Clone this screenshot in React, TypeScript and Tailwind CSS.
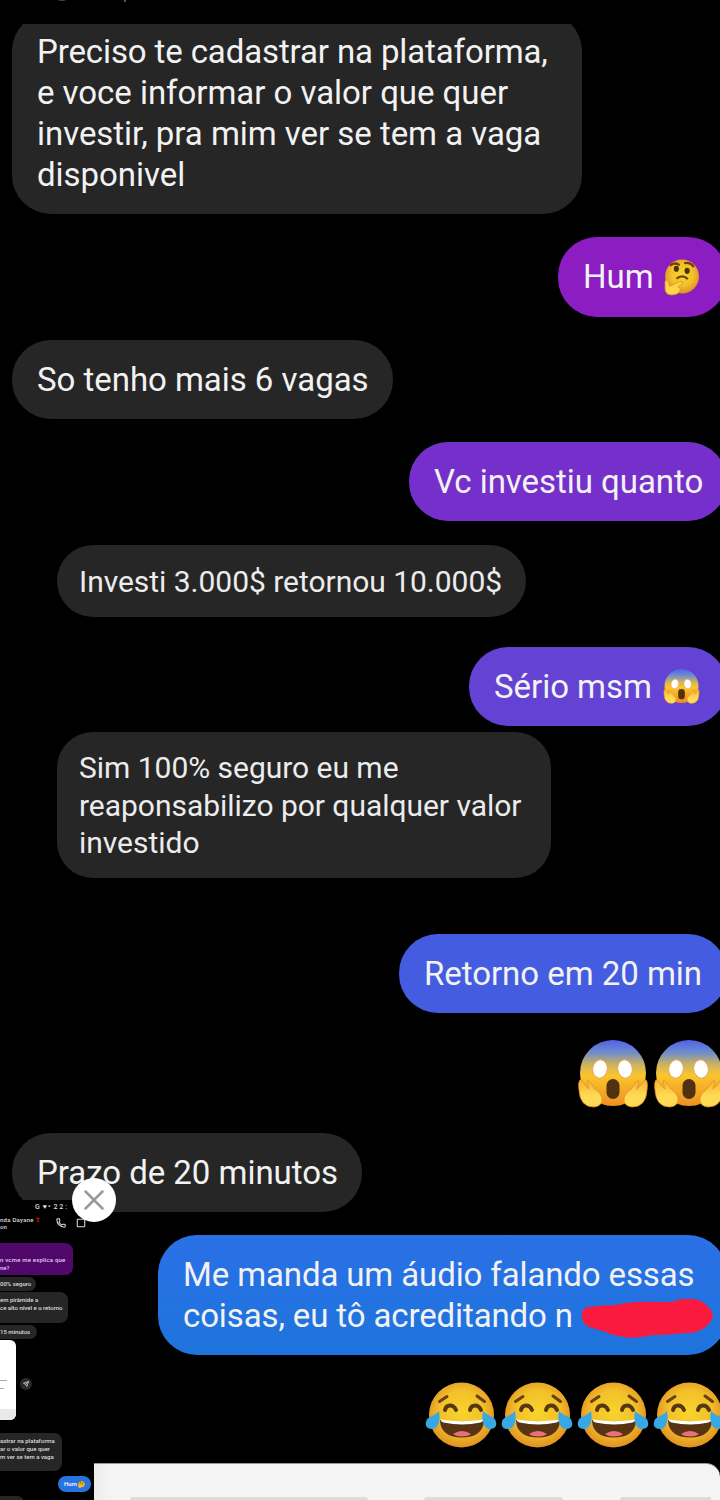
import type { ReactNode } from 'react';
import { X, Phone, Send, Square } from 'lucide-react';

interface BubbleProps {
  className: string;
  children: ReactNode;
}

function Bubble({ className, children }: BubbleProps) {
  return (
    <div
      className={`flex shrink-0 flex-col justify-center rounded-[39px] pb-px pl-[25px] text-[33px] leading-[41px] tracking-[-0.04px] whitespace-nowrap text-[#f2f2f2] ${className}`}
    >
      {children}
    </div>
  );
}

function SmallBubble({ className, children }: BubbleProps) {
  return (
    <div
      className={`ml-[57px] flex shrink-0 flex-col justify-center rounded-[36px] pt-px pl-[22px] text-[30px] leading-[37.5px] tracking-[-0.03px] whitespace-nowrap text-[#ececec] ${className}`}
    >
      {children}
    </div>
  );
}

function EmojiDefs() {
  return (
    <svg className="absolute h-0 w-0">
      <defs>
        <radialGradient id="face" cx="50%" cy="45%" r="55%">
          <stop offset="0" stopColor="#f8d42c" />
          <stop offset="0.6" stopColor="#f3c02a" />
          <stop offset="1" stopColor="#e09022" />
        </radialGradient>
        <linearGradient id="scream" x1="0" y1="0" x2="0" y2="1">
          <stop offset="0" stopColor="#5361e8" />
          <stop offset="0.18" stopColor="#6b8bd0" />
          <stop offset="0.38" stopColor="#d0b45c" />
          <stop offset="0.54" stopColor="#fbc52c" />
          <stop offset="1" stopColor="#ef8e22" />
        </linearGradient>
        <linearGradient id="hand" x1="0" y1="0" x2="0" y2="1">
          <stop offset="0" stopColor="#f6b030" />
          <stop offset="0.6" stopColor="#ffdb55" />
        </linearGradient>
      </defs>
    </svg>
  );
}

function Scream({ className }: { className: string }) {
  return (
    <svg viewBox="0 0 72 72" className={`shrink-0 ${className}`}>
      <circle cx="36" cy="35" r="33" fill="url(#scream)" />
      <ellipse cx="23" cy="31" rx="7.300" ry="9.200" fill="#fff" stroke="#e6aa55" transform="rotate(10 23 31)" />
      <ellipse cx="48" cy="31" rx="7.300" ry="9.200" fill="#fff" stroke="#e6aa55" transform="rotate(-10 48 31)" />
      <rect x="29.500" y="41" width="13" height="20" rx="6.500" fill="#503110" />
      <g fill="url(#hand)" stroke="#e0902c" strokeWidth="0.800">
        <path d="M3 42Q1 44 2 52 3 69 17 69q9-1 8-9-1-5-7-9l-5-7q-3-3-3 0l2 7Q9 49 7 45 5 41 3 42Z" />
        <path d="M69 42q2 2 1 10-1 17-15 17-9-1-8-9 1-5 7-9l5-7q3-3 3 0l-2 7q3-2 5-6 2-4 4-3Z" />
      </g>
    </svg>
  );
}

function Thinking({ className }: { className: string }) {
  return (
    <svg viewBox="0 0 72 72" className={`shrink-0 ${className}`}>
      <circle cx="37" cy="34" r="33" fill="url(#face)" />
      <path d="M15 12q8-6 16-1M43 8q10-2 16 6" fill="none" stroke="#6d430d" strokeWidth="4.500" strokeLinecap="round" />
      <ellipse cx="26" cy="19" rx="5" ry="6" fill="#49300e" />
      <ellipse cx="47" cy="23" rx="5" ry="6" fill="#49300e" />
      <path d="M28 37q11-7 19 1" fill="none" stroke="#6d430d" strokeWidth="4.500" strokeLinecap="round" />
      <path
        d="M4 43q4-4 7 3l2 7 20-9q6-1 5 4l-9 6q6 2 4 8-3 8-16 8Q4 70 4 58Z"
        fill="#ffd54a"
        stroke="#dc8c20"
        strokeWidth="1.500"
      />
    </svg>
  );
}

function Joy() {
  return (
    <svg viewBox="0 0 72 72" className="h-[72px] w-[72px] shrink-0">
      <circle cx="36.500" cy="35" r="32.500" fill="url(#face)" />
      <path d="M14.500 21.500L22 16.500M52 16l7.500 5.500" fill="none" stroke="#68410f" strokeWidth="3" strokeLinecap="round" />
      <path
        d="M20 30q1-4.500 5-4.500t6 4.500M45 30q1-4.500 5-4.500t6 4.500"
        fill="none"
        stroke="#553710"
        strokeWidth="4"
        strokeLinecap="round"
      />
      <path d="M15 40q22 3 44 0c0 12-9 17.500-22 17.500S15 52 15 40Z" fill="#583415" />
      <path d="M15.500 39.500q21.500 3.500 43 0 0 2-3 3-18 4-37 0-3-1-3-3Z" fill="#fff" />
      <path d="M28 54q9-6 18 0-3 2.500-9 2.500T28 54Z" fill="#e87178" />
      <path d="M14 31c2 10-1 18-7 18-5 0-7-3-6-7 1-6 8-5 13-11Z" fill="#38a8e4" />
      <path d="M58 31c-2 10 1 18 7 18 5 0 7-3 6-7-1-6-7-5-13-11Z" fill="#38a8e4" />
    </svg>
  );
}

// Floating mini copy of the conversation
function MiniScreen() {
  return (
    <div className="absolute top-[1200px] left-0 h-[300px] w-[94px] overflow-hidden bg-black text-[6px] leading-[8px] font-medium whitespace-nowrap text-[#ddd]">
      <div className="mt-[2px] flex h-[10px] items-center pl-[35px] text-[7px]">
        <span>G</span>
        <span className="ml-[3px]">♥</span>
        <span className="ml-px">•</span>
        <span className="ml-[3px] tracking-[2px]">22:</span>
      </div>
      <div className="mt-[2px] flex h-[18px] items-center pr-[7px]">
        <div className="w-[56px] shrink-0 leading-[7px]">
          <div className="tracking-[0.25px]">
            nda Dayane <span className="text-red-600">❣</span>
          </div>
          <div>on</div>
        </div>
        <Phone className="h-[10px] w-[10px] shrink-0" strokeWidth={2.5} />
        <Square className="ml-[10px] h-[10px] w-[10px] shrink-0" strokeWidth={2.5} />
      </div>
      <div className="mt-[11px] h-[32px] w-[73px] rounded-r-[8px] bg-[#50096a] pt-[13px] text-[#e8c8ee]">
        <div className="tracking-[0.2px]">n vcme me explica que</div>
        <div>ne?</div>
      </div>
      <div className="mt-[2px] h-[14px] w-[36px] rounded-r-[7px] bg-[#262626] pt-[3px]">00% seguro</div>
      <div className="mt-px h-[31px] w-[68px] rounded-r-[8px] bg-[#262626] pt-[4px]">
        <div>em pirâmide a</div>
        <div>ce alto nível e u retorno</div>
      </div>
      <div className="mt-[2px] h-[14px] w-[37px] rounded-r-[7px] bg-[#262626] pt-[3px]">15 minutos</div>
      <div className="mt-px flex items-center gap-[4px]">
        <div className="flex h-[80px] w-[16px] flex-col justify-end rounded-r-[6px] bg-white">
          <div className="mb-[7px] h-px w-[7px] bg-[#aaa]" />
          <div className="mb-[20px] h-px w-[4px] bg-[#aaa]" />
          <div className="h-[11px] rounded-br-[6px] bg-[#e9eaec]" />
        </div>
        <div className="mt-[8px] flex h-[12px] w-[12px] items-center justify-center rounded-full bg-[#2b2b2b]">
          <Send className="h-[6px] w-[6px]" strokeWidth={3} />
        </div>
      </div>
      <div className="mt-[13px] h-[38px] w-[62px] rounded-r-[8px] bg-[#262626] pt-[4px]">
        <div>astrar na plataforma</div>
        <div>ar o valor que quer</div>
        <div>m ver se tem a vaga</div>
      </div>
      <div className="mt-[5px] ml-[58px] flex h-[16px] w-[33px] items-center justify-center gap-px rounded-full bg-[#2874df] text-white">
        Hum <Thinking className="h-[7px] w-[7px]" />
      </div>
      <div className="mt-[4px] h-[12px] w-[24px] rounded-tr-[7px] bg-[#262626]" />
    </div>
  );
}

export default function App() {
  return (
    <div className="relative h-[1500px] w-[720px] overflow-hidden bg-black font-['Roboto',sans-serif]">
      <EmojiDefs />

      {/* Header edge, clips the first message */}
      <div className="absolute top-0 left-0 h-[24px] w-full overflow-hidden bg-black">
        <div className="absolute -top-[19px] left-[52px] h-[20px] w-[20px] rounded-full bg-[#444]" />
        <div className="absolute top-0 left-[124px] h-[2px] w-[2px] bg-[#555]" />
      </div>

      {/* Messages */}
      <div className="flex w-[727px] flex-col items-start pt-[12px]">
        <Bubble className="ml-[12px] h-[202px] w-[570px] bg-[#262626]">
          <p className="tracking-[-0.12px]">Preciso te cadastrar na plataforma,</p>
          <p>e voce informar o valor que quer</p>
          <p>investir, pra mim ver se tem a vaga</p>
          <p>disponivel</p>
        </Bubble>

        <Bubble className="mt-[23px] h-[80px] w-[169px] self-end bg-[#8b1dc2]">
          <p className="flex items-center">
            Hum
            <Thinking className="ml-[9px] mt-px h-[37px] w-[37px]" />
          </p>
        </Bubble>

        <Bubble className="mt-[23px] ml-[12px] h-[79px] w-[381px] bg-[#262626]">
          <p>So tenho mais 6 vagas</p>
        </Bubble>

        <Bubble className="mt-[23px] h-[79px] w-[318px] self-end bg-[#7530cb]">
          <p>Vc investiu quanto</p>
        </Bubble>

        <SmallBubble className="mt-[24px] h-[72px] w-[469px] bg-[#262626]">
          <p>Investi 3.000$ retornou 10.000$</p>
        </SmallBubble>

        <Bubble className="mt-[30px] h-[79px] w-[258px] self-end bg-[#6342d4]">
          <p className="flex items-center">
            Sério msm
            <Scream className="ml-[11px] mt-px h-[37px] w-[37px]" />
          </p>
        </Bubble>

        <SmallBubble className="mt-[6px] h-[146px] w-[494px] bg-[#262626]">
          <p>Sim 100% seguro eu me</p>
          <p>reaponsabilizo por qualquer valor</p>
          <p>investido</p>
        </SmallBubble>

        <Bubble className="mt-[56px] h-[79px] w-[328px] self-end bg-[#445cdf]">
          <p>Retorno em 20 min</p>
        </Bubble>

        <div className="mt-[25px] ml-[577px] flex h-[72px] gap-[4px]">
          <Scream className="h-[72px] w-[72px]" />
          <Scream className="h-[72px] w-[72px]" />
        </div>

        <Bubble className="mt-[23px] ml-[12px] h-[79px] w-[350px] bg-[#262626]">
          <p>Prazo de 20 minutos</p>
        </Bubble>

        <Bubble className="mt-[23px] h-[120px] w-[569px] self-end bg-gradient-to-b from-[#2a70e6] to-[#1d74dd]">
          <p className="tracking-[-0.12px]">Me manda um áudio falando essas</p>
          <p className="flex items-center tracking-[-0.12px]">
            coisas, eu tô acreditando n
            <svg viewBox="0 0 132 40" className="absolute left-[581px] mt-[8px] h-[40px] w-[132px]">
              <path
                d="M1 14Q2 8 8 8q14-2 27-2 18-4 38-3h18q8-4 18-3 10 0 15 5 6 4 8 11-1 8-9 13-8 6-20 5-18 2-32 2-17 4-28 2-13-2-18-5l-17-5Q0 25 1 14Z"
                fill="#fa1a3e"
              />
            </svg>
          </p>
        </Bubble>

        <div className="mt-[25px] ml-[425px] flex h-[72px] gap-[4px]">
          <Joy />
          <Joy />
          <Joy />
          <Joy />
        </div>

        {/* Keyboard edge */}
        <div className="mt-[11px] ml-[94px] flex h-[37px] w-[626px] items-end overflow-hidden rounded-tr-[14px] border-t border-[#999] bg-gradient-to-r from-[#ededed] to-[#f5f5f5] to-3% pl-[36px]">
          <div className="h-[3px] w-[238px] rounded-t-[3px] bg-[#dcdcdc]" />
          <div className="ml-[56px] h-[3px] w-[139px] rounded-t-[3px] bg-[#dcdcdc]" />
          <div className="ml-[57px] h-[3px] w-[91px] rounded-tl-[3px] bg-[#dcdcdc]" />
        </div>
      </div>

      <MiniScreen />

      {/* Close button of the floating screen */}
      <button className="absolute top-[1178px] left-[72px] flex h-[44px] w-[44px] items-center justify-center rounded-full bg-white">
        <X className="h-[34px] w-[34px] text-[#999]" strokeWidth={1.8} />
      </button>
    </div>
  );
}
